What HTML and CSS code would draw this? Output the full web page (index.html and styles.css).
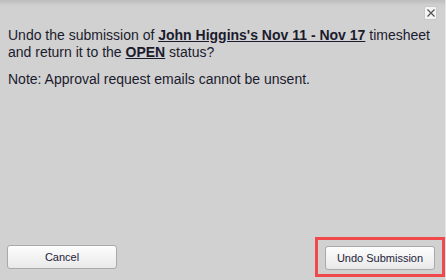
FILE: index.html
```html
<!DOCTYPE html>
<html>
<head>
<meta charset="utf-8">
<link rel="stylesheet" href="styles.css">
</head>
<body>
<div class="dialog">
  <div class="topbar"><button class="close" aria-label="Close"><svg width="10" height="10" viewBox="0 0 10 10"><path d="M1.5 1.5L8.5 8.5M8.5 1.5L1.5 8.5" stroke="#555" stroke-width="1.3"/></svg></button></div>
  <div class="content">
    <p class="msg">Undo the submission of <b><u>John Higgins's Nov 11 - Nov 17</u></b> timesheet and return it to the <b><u>OPEN</u></b> status?</p>
    <p class="note">Note: Approval request emails cannot be unsent.</p>
  </div>
  <div class="actions">
    <button class="btn">Cancel</button>
    <div class="highlight"><button class="btn">Undo Submission</button></div>
  </div>
</div>
</body>
</html>
```
FILE: styles.css
```css
html, body { margin: 0; padding: 0; }
body { width: 446px; height: 280px; overflow: hidden; background: #d1d1d1; font-family: "Liberation Sans", Arial, sans-serif; }
.dialog { width: 446px; height: 280px; display: flex; flex-direction: column; box-sizing: border-box; border-right: 1px solid #e4e4e4; background: linear-gradient(#bdbdbd 0, #cfcfcf 5px, #d1d1d1 8px); }
.topbar { height: 22px; display: flex; justify-content: flex-end; padding: 6px 8px 0 0; box-sizing: border-box; }
.close { width: 13px; height: 14px; padding: 0; border: 1px solid #c8c8c8; border-radius: 2px; background: #f4f4f4; display: flex; align-items: center; justify-content: center; }
.content { flex: 1; padding: 5px 8px 0 8px; color: #1b1b2e; font-size: 14px; line-height: 17px; }
.msg { margin: 0; }
.note { margin: 10px 0 0; }
.actions { display: flex; justify-content: space-between; align-items: center; padding: 0 0 3px 7px; }
.btn { width: 110px; height: 24px; border: 1px solid #a9a9a9; border-radius: 3px; background: linear-gradient(#fdfdfd, #e9e9e9); font-family: "Liberation Sans", Arial, sans-serif; font-size: 11px; color: #23233a; padding: 0; }
.highlight { border: 3px solid #f0484b; padding: 6px 7px 4px 7px; }
```
